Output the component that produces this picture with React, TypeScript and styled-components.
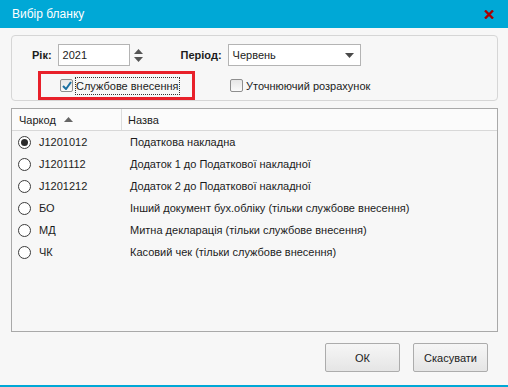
import React from "react";
import styled, { createGlobalStyle } from "styled-components";

const GlobalStyle = createGlobalStyle`
  html, body { margin: 0; padding: 0; background: #f7f7f7; }
  body { font-family: "Liberation Sans", Arial, sans-serif; font-size: 11px; color: #1c1c1c; }
`;

const Window = styled.div`
  width: 508px;
  height: 387px;
  display: flex;
  flex-direction: column;
  background: #f7f7f7;
  border-bottom: 2px solid #00a8d6;
  box-sizing: border-box;
  overflow: hidden;
`;

const TitleBar = styled.div`
  height: 28px;
  flex: none;
  background: #00a8d6;
  color: #fff;
  display: flex;
  align-items: center;
  justify-content: space-between;
  padding: 0 14px 0 12px;
  font-size: 12px;
`;

const Body = styled.div`
  flex: 1;
  display: flex;
  flex-direction: column;
  padding: 7px 10px 0 11px;
`;

const Group = styled.div`
  height: 66px;
  box-sizing: border-box;
  border: 1px solid #d6d6d6;
  border-radius: 4px;
  display: flex;
  flex-direction: column;
  padding: 8px 0 0 20px;
`;

const Row = styled.div`
  display: flex;
  align-items: center;
`;

const Label = styled.span<{ $ml?: number }>`
  font-weight: bold;
  margin-left: ${(p) => p.$ml ?? 0}px;
  margin-right: 6px;
`;

const Field = styled.div<{ $w: number }>`
  width: ${(p) => p.$w}px;
  height: 22px;
  box-sizing: border-box;
  border: 1px solid #b4b4b4;
  background: #fff;
  display: flex;
  align-items: center;
  justify-content: space-between;
  padding: 0 6px 0 4px;
`;

const Spinner = styled.div`
  display: flex;
  flex-direction: column;
  gap: 3px;
  margin-left: 4px;
`;

const CheckRow = styled(Row)`
  margin-top: 5px;
  margin-left: 6px;
`;

const Highlight = styled.div`
  width: 157px;
  height: 29px;
  box-sizing: border-box;
  border: 3px solid #e8202a;
  display: flex;
  align-items: center;
  padding-left: 19px;
  margin-right: 35px;
`;

const Check = styled.label<{ $focus?: boolean }>`
  display: flex;
  align-items: center;
  gap: 3px;
  span {
    outline: ${(p) => (p.$focus ? "1px dotted #333" : "none")};
    padding: 1px 0;
    line-height: 14px;
  }
`;

const Box = styled.div`
  width: 13px;
  height: 13px;
  box-sizing: border-box;
  border: 1px solid #8e8e8e;
  border-radius: 2px;
  background: linear-gradient(#e6e6e6, #fafafa);
  display: flex;
  align-items: center;
  justify-content: center;
`;

const Table = styled.div`
  margin-top: 7px;
  height: 224px;
  box-sizing: border-box;
  border: 1px solid #a9a9a9;
  background: #f7f7f7;
  width: 487px;
`;

const Header = styled.div`
  display: grid;
  grid-template-columns: 110px 1fr;
  height: 21px;
  background: #fbfbfb;
  border-bottom: 1px solid #d8d8d8;
`;

const HeadCell = styled.div`
  display: flex;
  align-items: center;
  gap: 8px;
  padding-left: 7px;
  border-right: 1px solid #dcdcdc;
  &:last-child { border-right: none; padding-left: 6px; }
`;

const DataRow = styled.div`
  display: grid;
  grid-template-columns: 118px 1fr;
  height: 22px;
  align-items: center;
`;

const CodeCell = styled.div`
  display: flex;
  align-items: center;
  gap: 8px;
  padding-left: 6px;
`;

const Radio = styled.div<{ $on?: boolean }>`
  width: 13px;
  height: 13px;
  box-sizing: border-box;
  border-radius: 50%;
  border: 1px solid #3c3c3c;
  background: #fff;
  display: flex;
  align-items: center;
  justify-content: center;
  &::after {
    content: "";
    width: 7px;
    height: 7px;
    border-radius: 50%;
    background: ${(p) => (p.$on ? "#2a2a2a" : "transparent")};
  }
`;

const Footer = styled.div`
  display: flex;
  justify-content: flex-end;
  gap: 13px;
  margin-top: 11px;
  padding-right: 10px;
`;

const Button = styled.button`
  width: 75px;
  height: 29px;
  border: 1px solid #acacac;
  border-radius: 2px;
  background: linear-gradient(#f6f6f6, #e5e5e5);
  font-family: inherit;
  font-size: 11px;
  font-weight: normal;
  color: #1c1c1c;
  padding: 0;
`;

const rows = [
  { code: "J1201012", name: "Податкова накладна" },
  { code: "J1201112", name: "Додаток 1 до Податкової накладної" },
  { code: "J1201212", name: "Додаток 2 до Податкової накладної" },
  { code: "БО", name: "Інший документ бух.обліку (тільки службове внесення)" },
  { code: "МД", name: "Митна декларація (тільки службове внесення)" },
  { code: "ЧК", name: "Касовий чек (тільки службове внесення)" },
];

const Tri = ({ up, color = "#555" }: { up?: boolean; color?: string }) => (
  <svg width="9" height="5" viewBox="0 0 9 5">
    <polygon points={up ? "0,5 9,5 4.5,0" : "0,0 9,0 4.5,5"} fill={color} />
  </svg>
);

export default function App() {
  return (
    <>
      <GlobalStyle />
      <Window>
        <TitleBar>
          <span>Вибір бланку</span>
          <svg width="10" height="9" viewBox="0 0 10 9">
            <path d="M1 0.5 L9 8.5 M9 0.5 L1 8.5" stroke="#a80000" strokeWidth="2.4" />
          </svg>
        </TitleBar>
        <Body>
          <Group>
            <Row>
              <Label>Рік:</Label>
              <Field $w={72}>2021</Field>
              <Spinner>
                <Tri up />
                <Tri />
              </Spinner>
              <Label $ml={38}>Період:</Label>
              <Field $w={133}>
                Червень
                <Tri color="#4a4a4a" />
              </Field>
            </Row>
            <CheckRow>
              <Highlight>
                <Check $focus>
                  <Box>
                    <svg width="10" height="9" viewBox="0 0 10 9">
                      <path d="M1 5 L4 8 L9 1" stroke="#1a6fa0" strokeWidth="2" fill="none" />
                    </svg>
                  </Box>
                  <span>Службове внесення</span>
                </Check>
              </Highlight>
              <Check>
                <Box />
                <span>Уточнюючий розрахунок</span>
              </Check>
            </CheckRow>
          </Group>
          <Table>
            <Header>
              <HeadCell>
                Чаркод
                <svg width="9" height="5" viewBox="0 0 9 5">
                  <polygon points="0,5 9,5 4.5,0" fill="#666" />
                </svg>
              </HeadCell>
              <HeadCell>Назва</HeadCell>
            </Header>
            {rows.map((r, i) => (
              <DataRow key={r.code}>
                <CodeCell>
                  <Radio $on={i === 0} />
                  {r.code}
                </CodeCell>
                <span>{r.name}</span>
              </DataRow>
            ))}
          </Table>
          <Footer>
            <Button>ОК</Button>
            <Button>Скасувати</Button>
          </Footer>
        </Body>
      </Window>
    </>
  );
}
